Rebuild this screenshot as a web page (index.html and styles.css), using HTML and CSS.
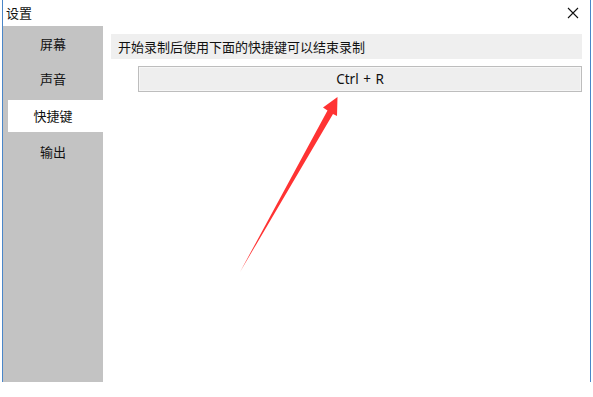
FILE: index.html
```html
<!DOCTYPE html>
<html lang="zh">
<head>
<meta charset="utf-8">
<title>设置</title>
<link rel="stylesheet" href="styles.css">
</head>
<body>
<div class="window">
  <div class="titlebar">
    <span class="title">设置</span>
    <svg class="close" width="12" height="12" viewBox="0 0 12 12"><path d="M1 1 L11 11 M11 1 L1 11" stroke="#111" stroke-width="1.1" fill="none"/></svg>
  </div>
  <div class="main">
    <div class="sidebar">
      <div class="item">屏幕</div>
      <div class="item">声音</div>
      <div class="item active">快捷键</div>
      <div class="item">输出</div>
    </div>
    <div class="content">
      <div class="hint">开始录制后使用下面的快捷键可以结束录制</div>
      <div class="hotkey">Ctrl + R</div>
    </div>
  </div>
</div>
<svg class="arrow" width="593" height="397" viewBox="0 0 593 397">
  <polygon points="337.5,97 323,107.5 327.5,110.5 240,272 333,114 337,116" fill="#ff3333"/>
</svg>
</body>
</html>
```
FILE: styles.css
```css
html, body {
  margin: 0;
  padding: 0;
  background: #ffffff;
  width: 593px;
  height: 397px;
  overflow: hidden;
  position: relative;
  font-family: "Noto Sans CJK SC", "Noto Sans", sans-serif;
  font-size: 13px;
  color: #111;
}
.window {
  margin-left: 2px;
  width: 587px;
  height: 382px;
  border-left: 1px solid #4a86c8;
  border-right: 1px solid #4a86c8;
  display: flex;
  flex-direction: column;
  background: #fff;
}
.titlebar {
  height: 26px;
  display: flex;
  align-items: center;
  justify-content: space-between;
  padding: 0 11px 0 3px;
}
.title {
  line-height: 26px;
  margin-top: -1px;
}
.close {
  display: block;
  margin-top: -1px;
}
.main {
  flex: 1;
  display: flex;
}
.sidebar {
  width: 95px;
  padding-left: 5px;
  background: #c3c3c3;
  display: flex;
  flex-direction: column;
}
.item {
  height: 35px;
  line-height: 35px;
  text-align: center;
  padding-right: 5px;
}
.item.active {
  background: #ffffff;
  height: 32px;
  line-height: 32px;
  margin: 4px 0 2px;
}
.content {
  flex: 1;
  padding: 8px 8px 0 8px;
}
.hint {
  height: 25px;
  line-height: 25px;
  background: #efefef;
  padding-left: 7px;
}
.hotkey {
  margin: 7px 0 0 27px;
  height: 24px;
  line-height: 24px;
  background: #eeeeee;
  border: 1px solid #bdbdbd;
  box-shadow: inset 0 0 0 1px #f6f6f6;
  text-align: center;
  font-family: "Noto Sans", "Noto Sans CJK SC", sans-serif;
  font-size: 13.5px;
  word-spacing: 1px;
}
.arrow {
  position: absolute;
  left: 0;
  top: 0;
  pointer-events: none;
}
```
